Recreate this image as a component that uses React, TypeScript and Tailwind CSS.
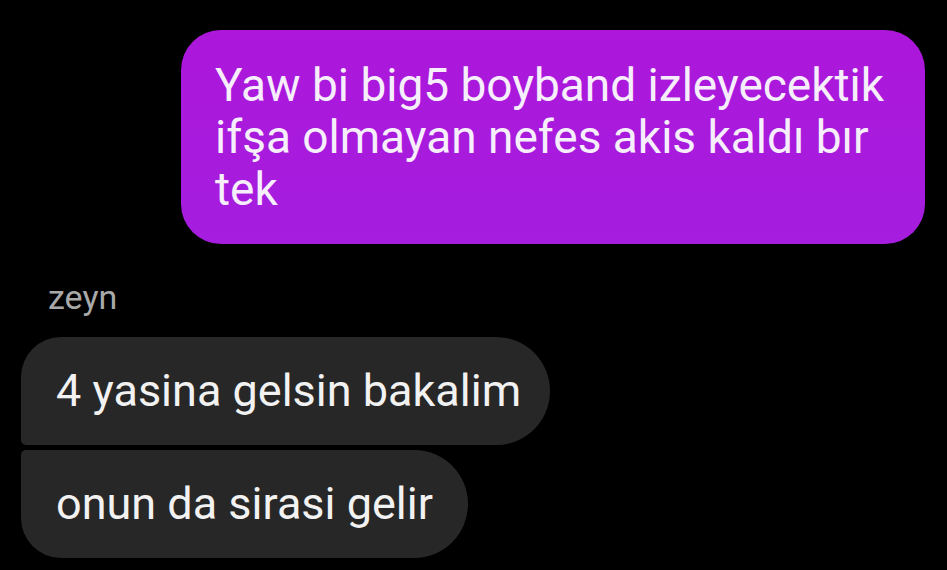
export default function App() {
  return (
    <div
      className="w-[947px] h-[570px] bg-black overflow-hidden flex flex-col"
      style={{ fontFamily: 'Roboto, "Noto Sans", sans-serif' }}
    >
      <div className="flex justify-end pt-[30px] pr-[22px]">
        <div className="w-[744px] h-[214px] rounded-[40px] bg-gradient-to-b from-[#ac17da] to-[#a51ddf] pl-[34px] pr-[16px] pt-[29px]">
          <p className="text-[46px] leading-[52px] text-[#f6eefb]">
            Yaw bi big5 boyband izleyecektik ifşa olmayan nefes akis kaldı bır tek
          </p>
        </div>
      </div>

      <div className="pl-[48px] mt-[33px] text-[34px] leading-[40px] text-[#a9a9a9]">zeyn</div>

      <div className="flex flex-col items-start pl-[21px] mt-[20px] gap-[5px]">
        <div className="h-[108px] w-[529px] bg-[#272727] rounded-tl-[40px] rounded-bl-[5px] rounded-r-[54px] flex items-center pl-[35px]">
          <span className="text-[45px] text-[#f2f2f2]">4 yasina gelsin bakalim</span>
        </div>
        <div className="h-[108px] w-[447px] bg-[#272727] rounded-tl-[5px] rounded-bl-[40px] rounded-r-[54px] flex items-center pl-[35px]">
          <span className="text-[45px] text-[#f2f2f2]">onun da sirasi gelir</span>
        </div>
      </div>
    </div>
  )
}
